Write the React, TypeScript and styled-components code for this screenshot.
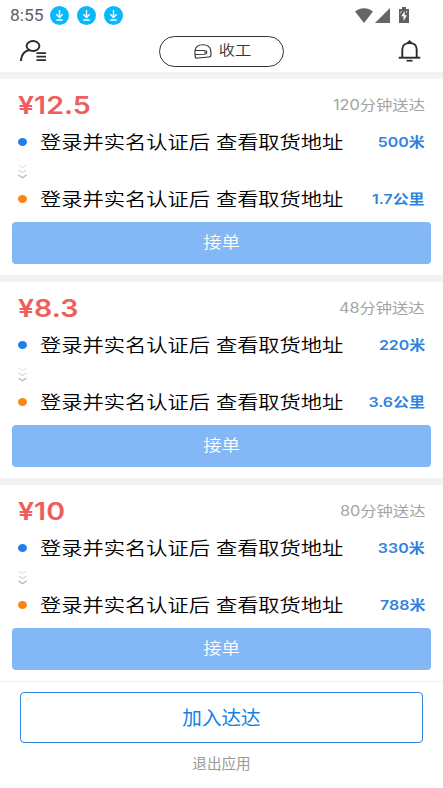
import React from "react";
import styled, { createGlobalStyle } from "styled-components";

const Global = createGlobalStyle`
  * { box-sizing: border-box; }
  body {
    margin: 0;
    background: #fff;
    font-family: "Liberation Sans", "Noto Sans CJK SC", sans-serif;
    overflow: hidden;
  }
  button { font: inherit; padding: 0; margin: 0; background: none; border: 0; }
`;

const Screen = styled.main`
  width: 443px;
  height: 788px;
  display: flex;
  flex-direction: column;
  background: #fff;
`;

const StatusBar = styled.div`
  height: 30px;
  padding: 0 34px 0 10px;
  display: flex;
  justify-content: space-between;
  align-items: center;
  flex: none;
`;

const StatusGroup = styled.div<{ $gap: number }>`
  display: flex;
  align-items: center;
  gap: ${(p) => p.$gap}px;
`;

const Clock = styled.span`
  width: 32px;
  font: 400 17.4px/30px Roboto, sans-serif;
  color: #606060;
  white-space: nowrap;
`;

const Header = styled.header`
  height: 42px;
  padding: 0 22px 0 20px;
  display: grid;
  grid-template-columns: 118px 125px 1fr;
  column-gap: 21px;
  align-items: center;
  flex: none;
`;

const IconButton = styled.button<{ $side: "start" | "end" }>`
  justify-self: ${(p) => p.$side};
  display: flex;
`;

const ShiftButton = styled.button`
  height: 31px;
  border: 1px solid #333;
  border-radius: 16px;
  display: flex;
  align-items: center;
  justify-content: center;
  gap: 6px;
  color: #333;
`;

const Wide = styled.span<{ $origin?: string }>`
  display: inline-block;
  white-space: nowrap;
  transform: scaleX(1.18);
  transform-origin: ${(p) => p.$origin ?? "center"} center;
`;

const ShiftLabel = styled(Wide)`
  font-size: 13.8px;
  line-height: 20px;
  font-weight: 350;
  padding: 0 1px 0 3px;
`;

const Orders = styled.section`
  display: flex;
  flex-direction: column;
  gap: 7px;
  padding-top: 7px;
  background: #f2f2f2;
  flex: none;
`;

const Card = styled.article`
  height: 196px;
  background: #fff;
  padding: 11px 12px 0;
  display: flex;
  flex-direction: column;
  font-family: Inter, "Noto Sans CJK SC", sans-serif;
`;

const CardHead = styled.div`
  height: 32px;
  padding: 0 6px;
  display: flex;
  justify-content: space-between;
  align-items: center;
`;

const Price = styled(Wide)`
  font-size: 24.2px;
  line-height: 32px;
  font-weight: 600;
  color: #ee5e5c;
`;

const Deadline = styled(Wide)`
  font-size: 13.8px;
  line-height: 30px;
  padding-bottom: 2px;
  font-weight: 400;
  color: #a3a3a3;
`;

const Stop = styled.div`
  height: 42px;
  padding: 0 6px;
  display: flex;
  align-items: center;
`;

const Dot = styled.i<{ $color: string }>`
  width: 9px;
  height: 8px;
  border-radius: 50%;
  background: ${(p) => p.$color};
  margin: 0 12.5px 2px 0;
`;

const Address = styled(Wide)`
  margin-right: auto;
  font-size: 18px;
  line-height: 42px;
  font-weight: 350;
  color: #000;
`;

const Distance = styled(Wide)`
  font-size: 13.5px;
  line-height: 40px;
  padding-bottom: 2px;
  font-weight: 600;
  color: #2f83dd;
`;

const Between = styled.div`
  height: 15px;
  padding-left: 5px;
  display: flex;
  align-items: center;
`;

const AcceptButton = styled.button`
  height: 42px;
  margin-top: 1px;
  border-radius: 4px;
  background: #84b7f5;
  color: #fff;
  font-size: 15.6px;
  font-weight: 350;
  line-height: 42px;
`;

const Footer = styled.footer`
  flex: 1;
  border-top: 1px solid #efefef;
  padding: 10px 20px 0;
  display: flex;
  flex-direction: column;
`;

const JoinButton = styled.button`
  height: 51px;
  border: 1px solid #3284d8;
  border-radius: 4px;
  color: #1581e2;
  font-size: 19.6px;
  line-height: 51px;
`;

const ExitButton = styled.button`
  align-self: center;
  margin-top: 9px;
  color: #999;
  font-size: 14.6px;
  line-height: 24px;
`;

const DownloadBadge = () => (
  <svg width="19" height="19" viewBox="0 0 19 19" fill="none">
    <circle cx="9.5" cy="9.5" r="9.5" fill="#08b8fb" />
    <path d="M9.5 4v7M6.3 8.2l3.2 3.2 3.2-3.2M6.3 14h6.4" stroke="#fff" strokeWidth="1.4" />
  </svg>
);

const WifiIcon = () => (
  <svg width="18" height="15" viewBox="0 0 18 15">
    <path d="M0 3.6C5-.9 13-.9 18 3.6L9 15z" fill="#666" />
  </svg>
);

const SignalIcon = () => (
  <svg width="15" height="15" viewBox="0 0 15 15">
    <path d="M15 0v15H0z" fill="#666" />
  </svg>
);

const BatteryIcon = () => (
  <svg width="10" height="16" viewBox="0 0 10 16">
    <path d="M3 0h4v2h3v14H0V2h3z" fill="#606060" />
    <path d="M5.7 4L2.2 9.3h2.3V14L8 8.2H5.7z" fill="#fff" />
    <path d="M1.3 6.3l1.4-2.5M7.2 5.8l.8-2" stroke="#ddd" strokeWidth=".9" />
  </svg>
);

const ProfileIcon = () => (
  <svg width="27" height="22" viewBox="0 0 27 22" fill="none" stroke="#2b2b2b">
    <ellipse cx="13" cy="6" rx="6.4" ry="5" strokeWidth="1.9" />
    <path d="M.9 21C1.2 14.5 4.5 11 9.8 10.1" strokeWidth="2" />
    <path d="M16.5 13.1H26M16.5 16.6H26M16.5 20.1H26" strokeWidth="1.6" />
  </svg>
);

const HelmetIcon = () => (
  <svg width="18" height="15" viewBox="0 0 18 15" fill="none" stroke="#333" strokeWidth="1.15" strokeLinejoin="round">
    <path d="M1 6.5C1.6 2.6 4.6.7 9 .7c4.700 0 7.400 2.300 7.800 6.300l.2 3.900c0 1.300-.8 2-2 2.100L1.700 14.200C1 12 .7 9 1 6.500z" />
    <path d="M1.100 6.500h8.600c1.800 0 3 .6 3 1.800s-1.100 1.900-2.900 2L1.100 10.500" />
    <circle cx="11" cy="8.300" r=".7" fill="#333" stroke="none" />
  </svg>
);

const BellIcon = () => (
  <svg width="23" height="22" viewBox="0 0 23 22" fill="none" stroke="#2b2b2b">
    <path d="M4.300 17V9.500C4.300 5.500 7 3.100 11.500 3.100s7.200 2.400 7.200 6.400V17" strokeWidth="1.900" />
    <path d="M8.500 3L11.500 0l3 3z" fill="#2b2b2b" stroke="none" />
    <path d="M.7 17.700h21.600" strokeWidth="1.900" />
    <path d="M8.500 20.700h6" strokeWidth="1.700" />
  </svg>
);

const ChevronTrail = () => (
  <svg width="11" height="16" viewBox="0 0 11 16" fill="none" strokeWidth="1.200">
    <path d="M1.500 1l4 2.600L9.500 1" stroke="#e8e8e8" />
    <path d="M1.500 6l4 2.600L9.500 6" stroke="#d8d8d8" />
    <path d="M1.500 11l4 2.800 4-2.800" stroke="#b5b5b5" />
  </svg>
);

const ADDRESS = "登录并实名认证后 查看取货地址";

const orders = [
  { price: "¥12.5", deadline: "120分钟送达", pickup: "500米", dropoff: "1.7公里" },
  { price: "¥8.3", deadline: "48分钟送达", pickup: "220米", dropoff: "3.6公里" },
  { price: "¥10", deadline: "80分钟送达", pickup: "330米", dropoff: "788米" },
];

const OrderStop = ({ color, distance }: { color: string; distance: string }) => (
  <Stop>
    <Dot $color={color} />
    <Address $origin="left">{ADDRESS}</Address>
    <Distance $origin="right">{distance}</Distance>
  </Stop>
);

export default function App() {
  return (
    <>
      <Global />
      <Screen>
        <StatusBar>
          <StatusGroup $gap={8}>
            <Clock>8:55</Clock>
            <DownloadBadge />
            <DownloadBadge />
            <DownloadBadge />
          </StatusGroup>
          <StatusGroup $gap={9}>
            <StatusGroup $gap={2}>
              <WifiIcon />
              <SignalIcon />
            </StatusGroup>
            <BatteryIcon />
          </StatusGroup>
        </StatusBar>
        <Header>
          <IconButton $side="start" aria-label="我的">
            <ProfileIcon />
          </IconButton>
          <ShiftButton>
            <HelmetIcon />
            <ShiftLabel>收工</ShiftLabel>
          </ShiftButton>
          <IconButton $side="end" aria-label="通知">
            <BellIcon />
          </IconButton>
        </Header>
        <Orders>
          {orders.map((o) => (
            <Card key={o.price}>
              <CardHead>
                <Price $origin="left">{o.price}</Price>
                <Deadline $origin="right">{o.deadline}</Deadline>
              </CardHead>
              <OrderStop color="#2180e8" distance={o.pickup} />
              <Between>
                <ChevronTrail />
              </Between>
              <OrderStop color="#f98613" distance={o.dropoff} />
              <AcceptButton>
                <Wide>接单</Wide>
              </AcceptButton>
            </Card>
          ))}
        </Orders>
        <Footer>
          <JoinButton>加入达达</JoinButton>
          <ExitButton>退出应用</ExitButton>
        </Footer>
      </Screen>
    </>
  );
}
